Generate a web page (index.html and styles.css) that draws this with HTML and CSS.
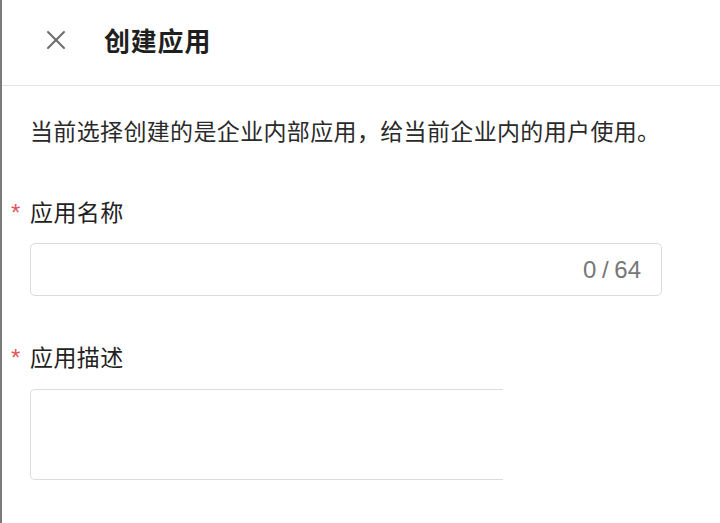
FILE: index.html
```html
<!DOCTYPE html>
<html lang="zh-CN">
<head>
  <meta charset="UTF-8">
  <meta name="viewport" content="width=device-width, initial-scale=1.0">
  <title>创建应用</title>
  <link rel="stylesheet" href="styles.css">
</head>
<body>
  <div class="page">
    <header class="topbar">
      <button class="close" aria-label="关闭">
        <svg width="20" height="20" viewBox="0 0 20 20">
          <path d="M2 2 L18 18 M18 2 L2 18" stroke="#6b6b6b" stroke-width="2" stroke-linecap="round" fill="none"/>
        </svg>
      </button>
      <h1 class="title">创建应用</h1>
    </header>

    <form class="form">
      <p class="intro">当前选择创建的是企业内部应用，给当前企业内的用户使用。</p>

      <div class="field">
        <label class="label"><span class="star">*</span>应用名称</label>
        <div class="input">
          <span class="count">0 / 64</span>
        </div>
      </div>

      <div class="field field-desc">
        <label class="label"><span class="star">*</span>应用描述</label>
        <div class="textarea"></div>
      </div>
    </form>
  </div>
</body>
</html>
```

FILE: styles.css
```css
/* Reset */
* {
  margin: 0;
  padding: 0;
  box-sizing: border-box;
}

body {
  background-color: #fff;
  font-family: "Noto Sans CJK SC", "Noto Sans", sans-serif;
  color: #222;
}

.page {
  min-height: 100vh;
  border-left: 2px solid #7a7a7a;
}

/* Header */
.topbar {
  height: 86px;
  display: flex;
  align-items: center;
  border-bottom: 1px solid #e4e4e4;
  padding-left: 44px;
}

.close {
  width: 20px;
  height: 20px;
  border: none;
  background: none;
  display: flex;
  margin-top: -6px;
}

.title {
  margin-left: 38px;
  margin-top: -6px;
  font-size: 26px;
  font-weight: 600;
  color: #1f1f1f;
  letter-spacing: 0.8px;
}

/* Form */
.form {
  padding: 28px 0 0 28px;
}

.intro {
  font-size: 23px;
  line-height: 32px;
  color: #2a2a2a;
  letter-spacing: 0.35px;
}

.field {
  margin-top: 49px;
}

.field-desc {
  margin-top: 44px;
}

.label {
  display: flex;
  align-items: center;
  margin-left: -20px;
  font-size: 23px;
  line-height: 32px;
  color: #222;
  letter-spacing: 0.4px;
}

.star {
  width: 20px;
  padding-left: 1px;
  color: #e0565a;
  font-family: "Liberation Sans", sans-serif;
  font-size: 24px;
  line-height: 24px;
  margin-top: 4px;
}

.input {
  margin-top: 16px;
  width: 632px;
  height: 53px;
  border: 1px solid #dcdcdc;
  border-radius: 5px;
  display: flex;
  align-items: center;
  justify-content: flex-end;
  padding-right: 20px;
}

.count {
  font-family: "Liberation Sans", sans-serif;
  font-size: 24px;
  color: #777;
  word-spacing: -1px;
}

.textarea {
  margin-top: 17px;
  width: 473px;
  height: 91px;
  border: 1px solid #dcdcdc;
  border-right: none;
  border-radius: 5px 0 0 5px;
}
```
